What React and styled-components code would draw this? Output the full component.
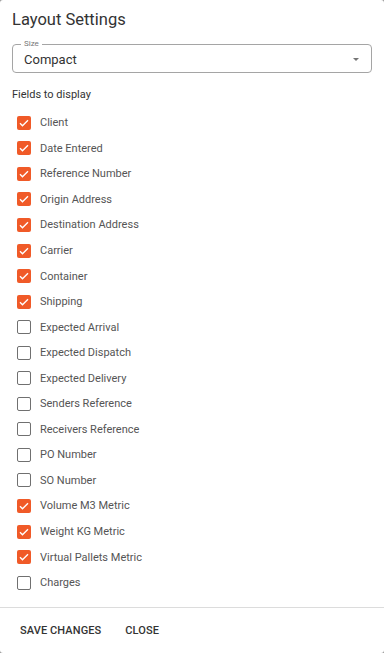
import React, { useState } from "react";
import styled, { createGlobalStyle } from "styled-components";

const Global = createGlobalStyle`
  html, body { margin: 0; padding: 0; background: #9a9a9a; }
  body { font-family: Roboto, "Liberation Sans", Arial, sans-serif; }
  * { box-sizing: border-box; }
`;

const Dialog = styled.div`
  width: 384px;
  height: 653px;
  background: #fff;
  border-radius: 3px;
  display: flex;
  flex-direction: column;
  overflow: hidden;
`;

const Content = styled.div`
  flex: 1;
  padding: 9px 12px 0 12px;
  display: flex;
  flex-direction: column;
`;

const Title = styled.h2`
  margin: 0;
  font-size: 16.5px;
  font-weight: 400;
  color: #333;
  line-height: 22px;
`;

const SelectBox = styled.div`
  position: relative;
  margin-top: 13px;
  height: 29px;
  border: 1px solid #a5a5a5;
  border-radius: 4px;
  display: flex;
  align-items: center;
  padding: 0 12px 0 11px;
`;

const SelectLabel = styled.span`
  position: absolute;
  top: -6px;
  left: 8px;
  padding: 0 3px;
  background: #fff;
  font-size: 8px;
  line-height: 10px;
  color: #777;
`;

const SelectValue = styled.span`
  font-size: 13px;
  color: #333;
  flex: 1;
  margin-top: 1px;
`;

const Arrow = styled.span`
  width: 0;
  height: 0;
  border-left: 3.5px solid transparent;
  border-right: 3.5px solid transparent;
  border-top: 3.5px solid #757575;
  margin-top: 1px;
`;

const SectionLabel = styled.div`
  margin-top: 15px;
  font-size: 11px;
  color: #333;
  line-height: 14px;
`;

const List = styled.div`
  margin-top: 8px;
  display: flex;
  flex-direction: column;
`;

const Row = styled.label`
  display: flex;
  align-items: center;
  height: 25.56px;
  padding-left: 5px;
  cursor: pointer;
`;

const Box = styled.span`
  width: 14px;
  height: 14px;
  border-radius: 2px;
  display: flex;
  align-items: center;
  justify-content: center;
  background: ${(p) => (p.$checked ? "#f05a28" : "#fff")};
  border: ${(p) => (p.$checked ? "none" : "1.5px solid #707070")};
`;

const RowText = styled.span`
  margin-left: 9px;
  font-size: 11px;
  color: #555;
`;

const Footer = styled.div`
  border-top: 1px solid #dcdcdc;
  height: 46px;
  display: flex;
  align-items: center;
  gap: 24px;
  padding-left: 20px;
`;

const Button = styled.button`
  background: none;
  border: none;
  padding: 0;
  font-family: inherit;
  font-size: 11px;
  font-weight: 500;
  letter-spacing: 0.1px;
  color: #333;
  text-transform: uppercase;
  cursor: pointer;
`;

const fields = [
  ["Client", true],
  ["Date Entered", true],
  ["Reference Number", true],
  ["Origin Address", true],
  ["Destination Address", true],
  ["Carrier", true],
  ["Container", true],
  ["Shipping", true],
  ["Expected Arrival", false],
  ["Expected Dispatch", false],
  ["Expected Delivery", false],
  ["Senders Reference", false],
  ["Receivers Reference", false],
  ["PO Number", false],
  ["SO Number", false],
  ["Volume M3 Metric", true],
  ["Weight KG Metric", true],
  ["Virtual Pallets Metric", true],
  ["Charges", false],
];

const Check = () => (
  <svg width="12" height="12" viewBox="0 0 24 24">
    <path d="M4 12.5l5 5L20 6.5" fill="none" stroke="#fff" strokeWidth="2.8" />
  </svg>
);

export default function App() {
  const [state, setState] = useState(fields.map((f) => f[1]));
  return (
    <>
      <Global />
      <Dialog>
        <Content>
          <Title>Layout Settings</Title>
          <SelectBox>
            <SelectLabel>Size</SelectLabel>
            <SelectValue>Compact</SelectValue>
            <Arrow />
          </SelectBox>
          <SectionLabel>Fields to display</SectionLabel>
          <List>
            {fields.map(([name], i) => (
              <Row
                key={name}
                onClick={() =>
                  setState((s) => s.map((v, j) => (j === i ? !v : v)))
                }
              >
                <Box $checked={state[i]}>{state[i] && <Check />}</Box>
                <RowText>{name}</RowText>
              </Row>
            ))}
          </List>
        </Content>
        <Footer>
          <Button>Save Changes</Button>
          <Button>Close</Button>
        </Footer>
      </Dialog>
    </>
  );
}
